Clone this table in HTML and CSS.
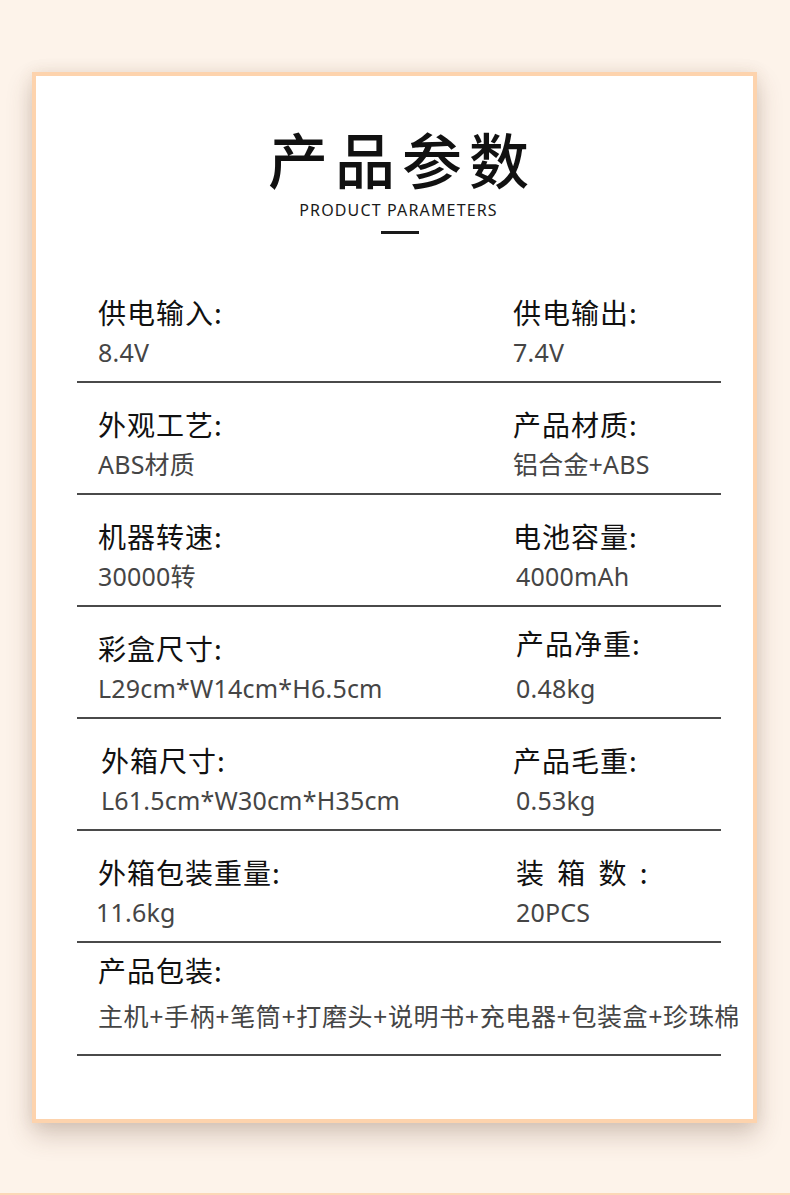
FILE: index.html
```html
<!DOCTYPE html>
<html lang="zh-CN">
<head>
<meta charset="utf-8">
<title>产品参数</title>
<link rel="stylesheet" href="styles.css">
</head>
<body>
<div class="page">
  <section class="card">
    <header class="head">
      <h1 class="title">产品参数</h1>
      <p class="subtitle">PRODUCT PARAMETERS</p>
      <span class="rule"></span>
    </header>
    <div class="specs">
      <div class="row">
        <div class="item">
          <div class="label">供电输入:</div>
          <div class="value">8.4V</div>
        </div>
        <div class="item">
          <div class="label">供电输出:</div>
          <div class="value">7.4V</div>
        </div>
      </div>
      <div class="row">
        <div class="item">
          <div class="label">外观工艺:</div>
          <div class="value">ABS材质</div>
        </div>
        <div class="item">
          <div class="label">产品材质:</div>
          <div class="value">铝合金+ABS</div>
        </div>
      </div>
      <div class="row">
        <div class="item">
          <div class="label">机器转速:</div>
          <div class="value">30000转</div>
        </div>
        <div class="item">
          <div class="label">电池容量:</div>
          <div class="value nudge">4000mAh</div>
        </div>
      </div>
      <div class="row">
        <div class="item">
          <div class="label">彩盒尺寸:</div>
          <div class="value">L29cm*W14cm*H6.5cm</div>
        </div>
        <div class="item nudge">
          <div class="label raise">产品净重:</div>
          <div class="value">0.48kg</div>
        </div>
      </div>
      <div class="row">
        <div class="item nudge">
          <div class="label">外箱尺寸:</div>
          <div class="value">L61.5cm*W30cm*H35cm</div>
        </div>
        <div class="item">
          <div class="label">产品毛重:</div>
          <div class="value nudge">0.53kg</div>
        </div>
      </div>
      <div class="row">
        <div class="item">
          <div class="label">外箱包装重量:</div>
          <div class="value back">11.6kg</div>
        </div>
        <div class="item nudge">
          <div class="label spaced">装 箱 数 :</div>
          <div class="value">20PCS</div>
        </div>
      </div>
      <div class="row row-wide">
        <div class="item">
          <div class="label">产品包装:</div>
          <div class="value wide">主机+手柄+笔筒+打磨头+说明书+充电器+包装盒+珍珠棉</div>
        </div>
      </div>
    </div>
  </section>
</div>
</body>
</html>
```

FILE: styles.css
```css
html, body {
  margin: 0;
  padding: 0;
}

body {
  background: #fdf3ea;
  font-family: "Noto Sans", "Noto Sans CJK SC", sans-serif;
}

.page {
  box-sizing: border-box;
  height: 1195px;
  padding: 72px 33px 0 32px;
  border-bottom: 2px solid #fcd7b6;
  overflow: hidden;
}

.card {
  box-sizing: border-box;
  height: 1051px;
  background: #ffffff;
  border: 4px solid #fdd3ad;
  box-shadow: 0 12px 24px rgba(90, 60, 40, 0.24), 0 0 14px rgba(120, 90, 60, 0.10);
  padding: 0 32px 0 41px;
}

.head {
  display: flex;
  flex-direction: column;
  align-items: center;
  padding-top: 52px;
  padding-left: 1px;
}

.title {
  margin: 0;
  font-family: "Noto Sans CJK SC", sans-serif;
  font-weight: 500;
  font-size: 60px;
  line-height: 60px;
  letter-spacing: 7px;
  text-indent: 5px;
  color: #111111;
}

.subtitle {
  margin: 12px 0 0;
  font-family: "Noto Sans", sans-serif;
  font-size: 16px;
  line-height: 21px;
  letter-spacing: 1.15px;
  text-indent: -2px;
  color: #1a1a1a;
}

.rule {
  display: block;
  width: 38px;
  height: 3px;
  margin-top: 10px;
  background: #1a1a1a;
}

.specs {
  margin-top: 37px;
}

.row {
  display: grid;
  grid-template-columns: 415px 1fr;
  height: 112px;
  box-sizing: border-box;
  padding: 22px 0 0 21px;
  border-bottom: 2px solid #4a4a4a;
}

.row-wide {
  grid-template-columns: 1fr;
  height: 113px;
  padding-top: 8px;
}

.item {
  display: flex;
  flex-direction: column;
  min-width: 0;
}

.label {
  font-family: "Noto Sans CJK SC", sans-serif;
  font-size: 28px;
  line-height: 38px;
  letter-spacing: 1px;
  color: #111111;
  white-space: nowrap;
}

.label.spaced {
  word-spacing: 5px;
}

.value {
  margin-top: 4px;
  font-family: "Noto Sans", "Noto Sans CJK SC", sans-serif;
  font-size: 25px;
  line-height: 34px;
  letter-spacing: 0.2px;
  color: #454545;
  white-space: nowrap;
}

.value.wide {
  letter-spacing: 0.6px;
  margin-top: 10px;
}

.nudge {
  padding-left: 3px;
}

.back {
  margin-left: -2px;
}

.raise {
  margin-top: -5px;
  margin-bottom: 5px;
}
```
